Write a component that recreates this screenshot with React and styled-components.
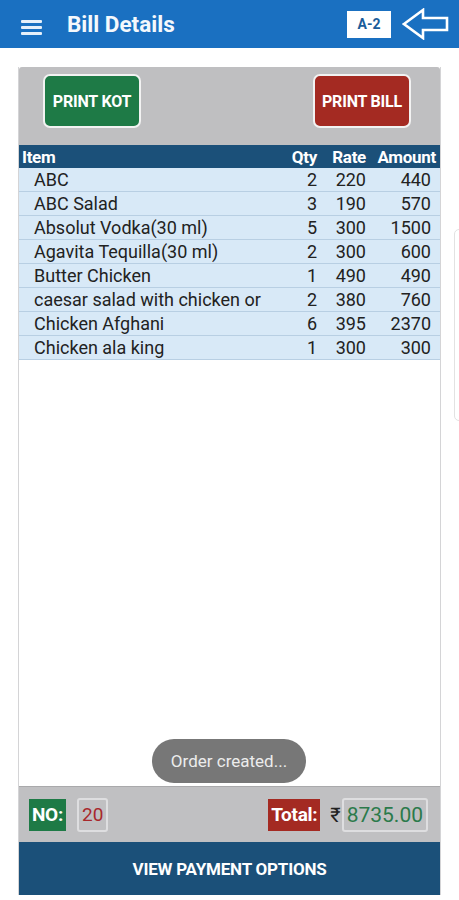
import React from "react";
import styled, { createGlobalStyle } from "styled-components";

const items = [
  { name: "ABC", qty: 2, rate: 220, amount: 440 },
  { name: "ABC Salad", qty: 3, rate: 190, amount: 570 },
  { name: "Absolut Vodka(30 ml)", qty: 5, rate: 300, amount: 1500 },
  { name: "Agavita Tequilla(30 ml)", qty: 2, rate: 300, amount: 600 },
  { name: "Butter Chicken", qty: 1, rate: 490, amount: 490 },
  { name: "caesar salad with chicken or", qty: 2, rate: 380, amount: 760 },
  { name: "Chicken Afghani", qty: 6, rate: 395, amount: 2370 },
  { name: "Chicken ala king", qty: 1, rate: 300, amount: 300 },
];

const App = () => {
  return (
    <>
      <GlobalStyle />
      <Page>
        <Header>
          <Menu>
            <span />
            <span />
            <span />
          </Menu>
          <Title>Bill Details</Title>
          <TableTag>A-2</TableTag>
          <BackArrow viewBox="0 0 47 32">
            <path d="M2 16 L21 2 V10 H45 V22 H21 V30 Z" />
          </BackArrow>
        </Header>
        <Main>
          <Card>
            <Toolbar>
              <PrintButton color="#1e7a46">PRINT KOT</PrintButton>
              <PrintButton color="#a42a22">PRINT BILL</PrintButton>
            </Toolbar>
            <HeadRow>
              <Cell>Item</Cell>
              <Cell right>Qty</Cell>
              <Cell right>Rate</Cell>
              <Cell right>Amount</Cell>
            </HeadRow>
            {items.map((it) => (
              <Row key={it.name}>
                <ItemCell>{it.name}</ItemCell>
                <Cell right>{it.qty}</Cell>
                <Cell right>{it.rate}</Cell>
                <AmountCell>{it.amount}</AmountCell>
              </Row>
            ))}
            <Body>
              <Toast>Order created...</Toast>
            </Body>
            <Footer>
              <Label color="#1e7a46">NO:</Label>
              <ValueBox color="#a8282c">20</ValueBox>
              <Spacer />
              <Label color="#a42a22">Total:</Label>
              <Rupee>₹</Rupee>
              <ValueBox color="#2b7a4b" wide>8735.00</ValueBox>
            </Footer>
            <PayButton>VIEW PAYMENT OPTIONS</PayButton>
          </Card>
        </Main>
        <ScrollHint />
      </Page>
    </>
  );
};

export default App;

const GlobalStyle = createGlobalStyle`
  body {
    margin: 0;
    background: #ffffff;
    font-family: Roboto, "Liberation Sans", sans-serif;
  }
`;

const Page = styled.div`
  position: relative;
  display: flex;
  flex-direction: column;
  width: 459px;
  height: 900px;
  overflow: hidden;
`;

const Header = styled.div`
  display: flex;
  align-items: center;
  height: 48px;
  padding: 0 10px 0 21px;
  background: #1a70c1;
  box-sizing: border-box;
`;

const Menu = styled.div`
  display: flex;
  flex-direction: column;
  gap: 3px;
  width: 21px;
  margin-top: 6px;

  span {
    height: 3px;
    border-radius: 1px;
    background: #e6f0fa;
  }
`;

const Title = styled.div`
  flex: 1;
  margin-left: 25px;
  color: #f4f8fc;
  font-size: 22.5px;
  font-weight: 700;
`;

const TableTag = styled.div`
  display: flex;
  align-items: center;
  justify-content: center;
  width: 44px;
  height: 27px;
  background: #ffffff;
  color: #1a5c9a;
  font-size: 14px;
  font-weight: 700;
`;

const BackArrow = styled.svg`
  width: 47px;
  height: 32px;
  margin-left: 11px;
  fill: none;
  stroke: #ffffff;
  stroke-width: 2.6;
  stroke-linejoin: miter;
`;

const Main = styled.div`
  flex: 1;
  display: flex;
  padding: 19px 18px 5px;
  min-height: 0;
`;

const Card = styled.div`
  flex: 1;
  display: flex;
  flex-direction: column;
  border-left: 1px solid #d4d4d6;
  border-right: 1px solid #d4d4d6;
`;

const Toolbar = styled.div`
  display: flex;
  justify-content: space-between;
  align-items: flex-start;
  height: 78px;
  padding: 7px 29px 0 24px;
  background: #bfbfc1;
  border-radius: 3px 3px 0 0;
  box-sizing: border-box;
`;

const PrintButton = styled.div`
  display: flex;
  align-items: center;
  justify-content: center;
  width: 98px;
  height: 54px;
  box-sizing: border-box;
  background: ${(p) => p.color};
  border: 2px solid #f2f2f2;
  border-radius: 7px;
  color: #ffffff;
  font-size: 16px;
  font-weight: 700;
  letter-spacing: -0.2px;
`;

const HeadRow = styled.div`
  display: grid;
  grid-template-columns: 1fr 40px 49px 70px;
  align-items: center;
  height: 23px;
  padding: 0 4px 0 3px;
  background: #1b5079;
  color: #ffffff;
  font-size: 17px;
  font-weight: 700;
  letter-spacing: -0.3px;
`;

const Row = styled.div`
  display: grid;
  grid-template-columns: 1fr 40px 49px 70px;
  align-items: center;
  height: 24px;
  padding: 0 4px 0 3px;
  background: #d8e9f7;
  border-bottom: 1px solid #b8cfe3;
  color: #222222;
  font-size: 18px;
  box-sizing: border-box;
`;

const Cell = styled.div`
  text-align: ${(p) => (p.right ? "right" : "left")};
  white-space: nowrap;
`;

const ItemCell = styled(Cell)`
  padding-left: 12px;
`;

const AmountCell = styled(Cell)`
  text-align: right;
  padding-right: 5px;
`;

const Body = styled.div`
  position: relative;
  flex: 1;
  background: #ffffff;
`;

const Toast = styled.div`
  position: absolute;
  left: 133px;
  bottom: 3px;
  display: flex;
  align-items: center;
  justify-content: center;
  width: 154px;
  height: 44px;
  border-radius: 22px;
  background: #777777;
  color: #ececec;
  font-size: 17px;
`;

const Footer = styled.div`
  display: flex;
  align-items: center;
  height: 56px;
  padding: 0 12px 0 10px;
  background: #c0c0c2;
  border-top: 1px solid #a9a9ab;
  box-sizing: border-box;
`;

const Label = styled.div`
  display: flex;
  align-items: center;
  height: 32px;
  padding: 0 3px;
  background: ${(p) => p.color};
  color: #ffffff;
  font-size: 19px;
  font-weight: 700;
  letter-spacing: -0.3px;
`;

const ValueBox = styled.div`
  display: flex;
  align-items: center;
  height: 34px;
  margin-left: ${(p) => (p.wide ? "1px" : "11px")};
  padding: 0 3px;
  box-sizing: border-box;
  border: 2px solid #dedee0;
  border-radius: 3px;
  color: ${(p) => p.color};
  font-size: ${(p) => (p.wide ? "21px" : "19px")};
`;

const Rupee = styled.div`
  margin-left: 10px;
  color: #222222;
  font-size: 20px;
`;

const Spacer = styled.div`
  flex: 1;
`;

const PayButton = styled.div`
  display: flex;
  align-items: center;
  justify-content: center;
  height: 53px;
  background: #1b5079;
  color: #ffffff;
  font-size: 17px;
  font-weight: 700;
  letter-spacing: -0.2px;
`;

const ScrollHint = styled.div`
  position: absolute;
  left: 454px;
  top: 229px;
  width: 12px;
  height: 190px;
  border: 1px solid #e2e2e2;
  border-radius: 5px;
`;
